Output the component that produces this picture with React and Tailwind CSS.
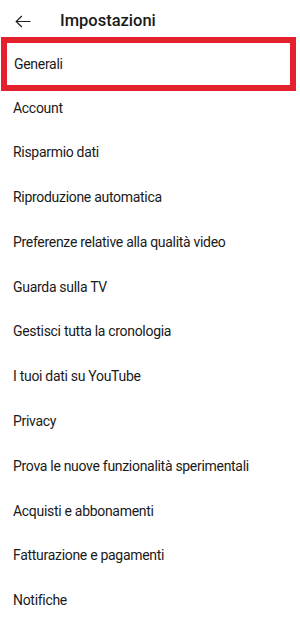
import React from "react";

const items = [
  "Account",
  "Risparmio dati",
  "Riproduzione automatica",
  "Preferenze relative alla qualità video",
  "Guarda sulla TV",
  "Gestisci tutta la cronologia",
  "I tuoi dati su YouTube",
  "Privacy",
  "Prova le nuove funzionalità sperimentali",
  "Acquisti e abbonamenti",
  "Fatturazione e pagamenti",
  "Notifiche",
];

export default function App() {
  return (
    <div className="w-[300px] h-[630px] bg-white overflow-hidden text-[#1a1a1a] font-['Roboto','Liberation_Sans',sans-serif]">
      <div className="h-[37px] flex items-center pt-[6px]">
        <svg width="16" height="13" viewBox="0 0 16 13" className="ml-[15px] mb-[1px]" fill="none" stroke="#202020" strokeWidth="1.2">
          <path d="M15.5 6.5H1.2M6.8 1L1.2 6.5l5.6 5.5" />
        </svg>
        <span className="ml-[29px] text-[16.5px] font-medium">Impostazioni</span>
      </div>
      <div className="ml-[1px] w-[295px] h-[54px] mb-[-5.4px] border-[6px] border-[#e3202b] flex items-center pl-[7px] relative">
        <span className="text-[14px] tracking-[-0.3px]">Generali</span>
      </div>
      <div className="flex flex-col">
        {items.map((t) => (
          <div key={t} className="h-[44.8px] shrink-0 flex items-center pl-[13px] text-[14px] tracking-[-0.3px]">
            {t}
          </div>
        ))}
      </div>
    </div>
  );
}
